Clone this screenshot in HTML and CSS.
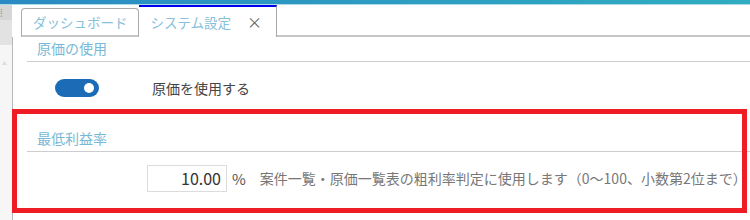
FILE: index.html
```html
<!DOCTYPE html>
<html lang="ja">
<head>
    <meta charset="UTF-8">
    <title>システム設定</title>
    <link rel="stylesheet" href="styles.css">
</head>
<body>
    <div class="topbar"></div>
    <div class="main">
        <div class="sidebar">
            <div class="side-handle">⁞</div>
            <div class="side-block"></div>
            <div class="side-arrow">▲</div>
        </div>
        <div class="workspace">
            <div class="tabs">
                <div class="tab">ダッシュボード</div>
                <div class="tab active">システム設定<span class="tab-close">×</span></div>
                <div class="tab-fill"></div>
            </div>
            <div class="panel">
                <div class="section">
                    <div class="section-title">原価の使用</div>
                    <div class="setting-row">
                        <span class="toggle on"><span class="knob"></span></span>
                        <span class="toggle-label">原価を使用する</span>
                    </div>
                </div>
                <div class="section">
                    <div class="section-title">最低利益率</div>
                    <div class="setting-row">
                        <input class="num-input" type="text" value="10.00">
                        <span class="unit">%</span>
                        <span class="hint">案件一覧・原価一覧表の粗利率判定に使用します（0〜100、小数第2位まで）</span>
                    </div>
                </div>
                <div class="highlight"></div>
            </div>
        </div>
    </div>
</body>
</html>
```

FILE: styles.css
```css
html, body { margin: 0; padding: 0; }
body { width: 750px; height: 220px; overflow: hidden; background: #fff; font-family: "Noto Sans CJK JP", "Noto Sans", sans-serif; font-size: 14px; color: #555; }

.topbar { height: 4px; background: linear-gradient(to right, #2a8ac3, #30adc1); border-bottom: 1px solid #a9dbe6; }

.main { display: flex; height: 215px; }
.sidebar { width: 12px; background: #f6f6f6; display: flex; flex-direction: column; }
.side-handle { height: 15px; background: #d6d6d6; color: #999; font-size: 10px; line-height: 15px; overflow: hidden; }
.side-block { height: 25px; background: #e2e2e2; }
.side-arrow { font-size: 5px; color: #ddd; padding: 15px 0 0 2px; line-height: 6px; }

.workspace { flex: 1; display: flex; flex-direction: column; }
.tabs { display: flex; align-items: flex-end; height: 32px; padding-left: 8px; border-left: 1px solid #fff; }
.tab { height: 29px; box-sizing: border-box; padding: 0 10px 0 11px; line-height: 27px; font-size: 13.5px; color: #86c0da; border: 1px solid #aaa; border-bottom: 2px solid #c6c6c6; border-radius: 4px 4px 0 0; background: #fff; white-space: nowrap; }
.tab.active { height: 32px; border: none; border-top: 2px solid #0000ee; border-right: 1px solid #aaa; border-radius: 0; padding: 0 14px 0 12px; line-height: 30px; }
.tab-close { color: #666; margin-left: 16px; font-size: 15px; }
.tab-fill { flex: 1; height: 32px; box-sizing: border-box; border-bottom: 2px solid #c6c6c6; }

.panel { position: relative; flex: 1; border-left: 1px solid #b8b8b8; }
.section { margin-bottom: 13px; }
.section-title { margin-left: 14px; padding: 0 0 2px 10px; line-height: 22px; color: #79b8d6; border-bottom: 1px solid #cdcdcd; }
.setting-row { display: flex; align-items: center; height: 52px; padding-left: 42px; }

.toggle { width: 44px; height: 18px; border-radius: 9px; background: #1c6bb7; display: flex; align-items: center; justify-content: flex-end; box-sizing: border-box; padding-right: 5px; }
.knob { width: 10px; height: 10px; border-radius: 50%; background: #fff; }
.toggle-label { margin-left: 53px; color: #444; }

.num-input { margin-left: 92px; width: 80px; height: 27px; box-sizing: border-box; border: 1px solid #dcdcdc; text-align: right; padding: 0 5px 0 0; font-family: inherit; font-size: 16px; color: #333; }
.unit { margin-left: 5px; font-size: 15px; color: #555; }
.hint { margin-left: 14px; color: #777; white-space: nowrap; }

.highlight { position: absolute; left: -1px; top: 72px; width: 735px; height: 104px; box-sizing: border-box; border: 5px solid #ee1d24; pointer-events: none; }
```
